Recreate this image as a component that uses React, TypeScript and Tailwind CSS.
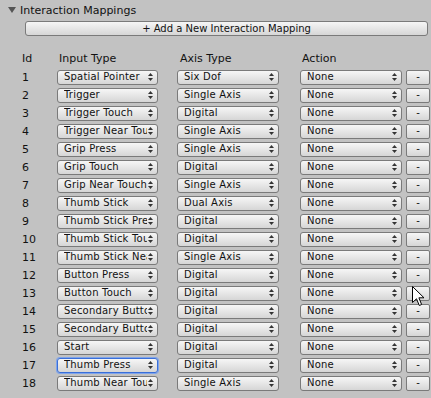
import React from 'react';

const rows: [string, string][] = [
  ['Spatial Pointer', 'Six Dof'],
  ['Trigger', 'Single Axis'],
  ['Trigger Touch', 'Digital'],
  ['Trigger Near Tou', 'Single Axis'],
  ['Grip Press', 'Single Axis'],
  ['Grip Touch', 'Digital'],
  ['Grip Near Touch', 'Single Axis'],
  ['Thumb Stick', 'Dual Axis'],
  ['Thumb Stick Pre', 'Digital'],
  ['Thumb Stick Tou', 'Digital'],
  ['Thumb Stick Nea', 'Single Axis'],
  ['Button Press', 'Digital'],
  ['Button Touch', 'Digital'],
  ['Secondary Butto', 'Digital'],
  ['Secondary Butto', 'Digital'],
  ['Start', 'Digital'],
  ['Thumb Press', 'Digital'],
  ['Thumb Near Tou', 'Single Axis'],
];

function Arrows() {
  return (
    <svg width="5" height="8" viewBox="0 0 5 8" className="shrink-0">
      <path d="M2.5 0 L5 3 L0 3 Z" fill="#333" />
      <path d="M0 5 L5 5 L2.5 8 Z" fill="#333" />
    </svg>
  );
}

function Popup({ label, width, focused }: { label: string; width: string; focused?: boolean }) {
  return (
    <div
      className={`${width} h-[15px] flex items-center pl-[6px] pr-[4px] rounded-[3px] border bg-gradient-to-b from-[#f6f6f6] to-[#d6d6d6] ${
        focused ? 'border-[#3a6fd8] shadow-[0_0_0_1px_#7ea4ec]' : 'border-[#7a7a7a]'
      }`}
    >
      <span className="flex-1 min-w-0 mr-[1px] text-[10px] leading-none whitespace-nowrap overflow-hidden tracking-[0.2px]">
        {label}
      </span>
      <Arrows />
    </div>
  );
}

export default function App() {
  return (
    <div className="relative w-[431px] h-[398px] bg-[#c2c2c2] text-[#111] font-['DejaVu_Sans',sans-serif] overflow-hidden">
      {/* foldout header */}
      <div className="flex items-center h-[14px] mt-[3px] pl-[8px] gap-[4px]">
        <svg width="8" height="8" viewBox="0 0 8 8">
          <path d="M0 1 L8 1 L4 7 Z" fill="#555" />
        </svg>
        <span className="text-[11px] leading-none">Interaction Mappings</span>
      </div>

      <div className="ml-[25px] mr-[3px] mt-[4px] h-[15px] rounded-[3px] border border-[#7a7a7a] bg-gradient-to-b from-[#f6f6f6] to-[#d6d6d6] flex items-center justify-center">
        <span className="text-[10px] leading-none">+ Add a New Interaction Mapping</span>
      </div>

      {/* column headers */}
      <div className="flex items-center h-[14px] mt-[15px] pl-[22px] text-[11px] leading-none">
        <span className="w-[37px]">Id</span>
        <span className="w-[121px]">Input Type</span>
        <span className="w-[122px]">Axis Type</span>
        <span>Action</span>
      </div>

      <div className="flex flex-col mt-[3px]">
        {rows.map(([input, axis], i) => (
          <div key={i} className="flex items-center h-[18px] pl-[22px]">
            <span className="w-[35px] text-[11px] leading-none">{i + 1}</span>
            <Popup label={input} width="w-[101px]" focused={i === 16} />
            <div className="w-[19px]" />
            <Popup label={axis} width="w-[102px]" />
            <div className="w-[21px]" />
            <Popup label="None" width="w-[102px]" />
            <div className="w-[4px]" />
            <div className="w-[24px] h-[15px] rounded-[2px] border border-[#7a7a7a] bg-gradient-to-b from-[#f6f6f6] to-[#d6d6d6] flex items-center justify-center text-[10px] leading-none">
              -
            </div>
          </div>
        ))}
      </div>

      {/* mouse cursor */}
      <svg className="absolute left-[412px] top-[286px]" width="13" height="21" viewBox="0 0 13 21">
        <path d="M0.5 0.5 L0.5 16.5 L4.5 12.8 L7.3 19.5 L9.6 18.5 L6.9 11.8 L12 11.8 Z" fill="#fff" stroke="#000" strokeWidth="1" strokeLinejoin="miter" />
      </svg>
    </div>
  );
}
